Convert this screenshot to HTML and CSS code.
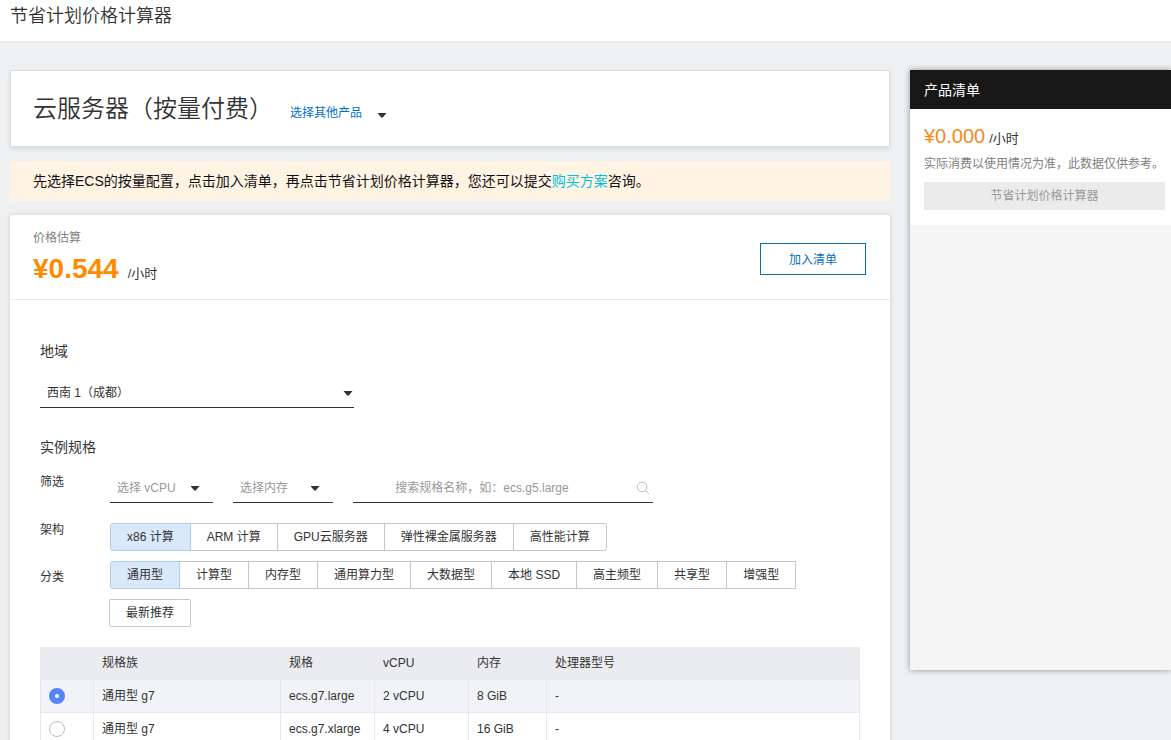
FILE: index.html
```html
<!DOCTYPE html>
<html lang="zh-CN">
<head>
<meta charset="utf-8">
<title>节省计划价格计算器</title>
<link rel="stylesheet" href="styles.css">
</head>
<body>
<div class="page">
  <header class="topbar"><h1 class="topbar-title">节省计划价格计算器</h1></header>
  <div class="layout">
    <main class="content">
      <section class="product">
        <h2 class="product-name">云服务器（按量付费）</h2>
        <button class="product-switch" type="button">选择其他产品<svg class="caret" viewBox="0 0 10 5" aria-hidden="true"><path d="M.5 0h9L6 4.300Q5 5.200 4 4.300z"/></svg></button>
      </section>
      <p class="notice">先选择ECS的按量配置，点击加入清单，再点击节省计划价格计算器，您还可以提交<a class="notice-link" href="#plan">购买方案</a>咨询。</p>
      <section class="config">
        <div class="estimate">
          <div>
            <div class="estimate-label">价格估算</div>
            <div class="estimate-price"><strong class="estimate-value">¥0.544</strong><span class="unit">/小时</span></div>
          </div>
          <button class="add-button" type="button">加入清单</button>
        </div>
        <div class="form">
          <label class="form-title" for="region">地域</label>
          <div class="select-box region-box">
            <select class="select" id="region"><option>西南 1（成都）</option></select>
            <svg class="caret" viewBox="0 0 10 5" aria-hidden="true"><path d="M.5 0h9L6 4.300Q5 5.200 4 4.300z"/></svg>
          </div>
          <h3 class="form-title spec-title">实例规格</h3>
          <div class="row filter-row">
            <span class="row-label">筛选</span>
            <div class="filters">
              <div class="select-box cpu-box">
                <select class="select select-empty" aria-label="选择 vCPU"><option>选择 vCPU</option></select>
                <svg class="caret" viewBox="0 0 10 5" aria-hidden="true"><path d="M.5 0h9L6 4.300Q5 5.200 4 4.300z"/></svg>
              </div>
              <div class="select-box memory-box">
                <select class="select select-empty" aria-label="选择内存"><option>选择内存</option></select>
                <svg class="caret" viewBox="0 0 10 5" aria-hidden="true"><path d="M.5 0h9L6 4.300Q5 5.200 4 4.300z"/></svg>
              </div>
              <div class="search-box">
                <input class="search" type="text" aria-label="搜索规格名称" placeholder="搜索规格名称，如：ecs.g5.large">
                <svg class="search-icon" viewBox="0 0 14 14" aria-hidden="true"><circle cx="6" cy="6" r="4.800"/><path d="M9.500 9.500L13 13"/></svg>
              </div>
            </div>
          </div>
          <div class="row arch-row">
            <span class="row-label">架构</span>
            <div class="segments">
              <button class="segment active" type="button">x86 计算</button>
              <button class="segment" type="button">ARM 计算</button>
              <button class="segment" type="button">GPU云服务器</button>
              <button class="segment" type="button">弹性裸金属服务器</button>
              <button class="segment" type="button">高性能计算</button>
            </div>
          </div>
          <div class="row type-row">
            <span class="row-label">分类</span>
            <div class="segments">
              <button class="segment active" type="button">通用型</button>
              <button class="segment" type="button">计算型</button>
              <button class="segment" type="button">内存型</button>
              <button class="segment" type="button">通用算力型</button>
              <button class="segment" type="button">大数据型</button>
              <button class="segment" type="button">本地 SSD</button>
              <button class="segment" type="button">高主频型</button>
              <button class="segment" type="button">共享型</button>
              <button class="segment" type="button">增强型</button>
              <button class="segment" type="button">最新推荐</button>
            </div>
          </div>
          <table class="specs">
            <colgroup><col class="col-pick"><col class="col-family"><col class="col-spec"><col class="col-cpu"><col class="col-memory"><col></colgroup>
            <thead>
              <tr><th></th><th>规格族</th><th>规格</th><th>vCPU</th><th>内存</th><th>处理器型号</th></tr>
            </thead>
            <tbody>
              <tr class="selected"><td><input class="radio" type="radio" name="spec" aria-label="ecs.g7.large" checked></td><td>通用型 g7</td><td>ecs.g7.large</td><td>2 vCPU</td><td>8 GiB</td><td>-</td></tr>
              <tr><td><input class="radio" type="radio" name="spec" aria-label="ecs.g7.xlarge"></td><td>通用型 g7</td><td>ecs.g7.xlarge</td><td>4 vCPU</td><td>16 GiB</td><td>-</td></tr>
            </tbody>
          </table>
        </div>
      </section>
    </main>
    <aside class="cart">
      <h2 class="cart-title">产品清单</h2>
      <div class="cart-summary">
        <div class="cart-price"><span class="cart-value">¥0.000</span><span class="unit">/小时</span></div>
        <p class="cart-note">实际消费以使用情况为准，此数据仅供参考。</p>
        <button class="cart-button" type="button" disabled>节省计划价格计算器</button>
      </div>
    </aside>
  </div>
</div>
</body>
</html>
```
FILE: styles.css
```css
* {
  box-sizing: border-box;
}

body {
  margin: 0;
  background: #eff0f2;
  color: #333;
  font-family: "Liberation Sans", "Noto Sans CJK SC", sans-serif;
  font-size: 12px;
  line-height: 20px;
}

h1, h2, h3, p {
  margin: 0;
  font-weight: 400;
}

button, input, select {
  margin: 0;
  color: inherit;
  font: inherit;
}

.page {
  height: 100vh;
  overflow: hidden;
}

.topbar {
  padding: 4px 10px 13px;
  background: #fff;
  border-bottom: 1px solid #e8eaec;
}

.topbar-title {
  font-size: 18px;
  font-weight: 350;
  line-height: 24px;
}

.layout {
  display: flex;
  align-items: flex-start;
  gap: 20px;
  padding: 28px 0 0 10px;
}

.content {
  flex: 1;
  min-width: 0;
}

.product {
  display: flex;
  align-items: center;
  gap: 17px;
  padding: 18px 22px 17px;
  background: #fff;
  border: 1px solid #dcdfe2;
  box-shadow: 0 2px 4px rgba(0, 0, 0, 0.1);
}

.product-name {
  font-size: 24px;
  font-weight: 350;
  line-height: 40px;
}

.product-switch {
  display: flex;
  align-items: center;
  gap: 15px;
  padding: 8px 0 0;
  background: none;
  border: 0;
  color: #0070cc;
}

.caret {
  width: 10px;
  height: 5px;
  fill: #333;
}

.product-switch .caret {
  margin-top: 4px;
}

.notice {
  margin: 14px 0;
  padding: 10px 23px;
  background: #fff3e4;
  color: #111;
  font-size: 14px;
}

.notice-link {
  color: #00c1de;
  text-decoration: none;
}

.config {
  background: #fff;
  border-radius: 2px;
  box-shadow: 0 0 5px rgba(0, 0, 0, 0.15);
}

.estimate {
  display: flex;
  align-items: center;
  justify-content: space-between;
  padding: 13px 24px 9px 23px;
  border-bottom: 1px solid #e9eaec;
}

.estimate-label {
  color: #808080;
}

.estimate-price {
  display: flex;
  align-items: baseline;
  gap: 9px;
  line-height: 42px;
}

.estimate-value {
  color: #ff8a00;
  font-size: 28px;
}

.unit {
  font-size: 13px;
  line-height: 20px;
}

.add-button {
  width: 106px;
  height: 32px;
  padding: 2px 0 0;
  background: #fff;
  border: 1px solid #0a6ebd;
  color: #0a6ebd;
}

.form {
  padding: 40px 30px 0;
}

.form-title {
  display: block;
  font-size: 14px;
  line-height: 22px;
}

.select-box, .search-box {
  position: relative;
  border-bottom: 1px solid #333;
}

.select, .search {
  display: block;
  width: 100%;
  height: 28px;
  padding: 0 28px 0 7px;
  appearance: none;
  background: none;
  border: 0;
  border-radius: 0;
  outline: 0;
}

.select-empty {
  color: #999;
}

.select-box .caret {
  position: absolute;
  top: 12px;
  right: 1px;
  pointer-events: none;
}

.region-box {
  width: 314px;
  margin: 17px 0 28px;
}

.row {
  display: flex;
}

.row-label {
  flex: 0 0 70px;
}

.filter-row {
  margin-top: 14px;
}

.filters {
  display: flex;
  gap: 20px;
  padding-top: 2px;
}

.cpu-box {
  width: 103px;
}

.memory-box {
  width: 100px;
}

.filters .caret {
  right: 13px;
}

.search-box {
  width: 300px;
}

.search {
  padding: 0 42px 0 0;
  text-align: center;
}

.search::placeholder {
  color: #999;
  opacity: 1;
}

.search-icon {
  position: absolute;
  top: 7px;
  right: 3px;
  width: 14px;
  height: 14px;
  fill: none;
  stroke: #bdbdbd;
}

.arch-row {
  margin-top: 20px;
}

.arch-row .row-label {
  line-height: 14px;
}

.type-row {
  margin-top: 10px;
}

.type-row .row-label {
  padding-top: 6px;
}

.segments {
  display: flex;
  flex-wrap: wrap;
  row-gap: 10px;
}

.segment {
  height: 28px;
  margin-left: -1px;
  padding: 0 16px;
  background: #fff;
  border: 1px solid #c4c6c9;
}

.segment:first-child {
  margin-left: 0;
  border-radius: 3px 0 0 3px;
}

.segment:last-child {
  border-radius: 0 3px 3px 0;
}

.type-row .segment:last-child {
  border-radius: 2px;
}

.segment.active {
  position: relative;
  background: #d9e9f9;
  border-color: #afd0ec;
}

.specs {
  width: 100%;
  margin-top: 20px;
  table-layout: fixed;
  border-collapse: separate;
  border-spacing: 0;
}

.col-pick {
  width: 54px;
}

.col-family {
  width: 187px;
}

.col-spec, .col-cpu {
  width: 94px;
}

.col-memory {
  width: 78px;
}

.specs th, .specs td {
  height: 33px;
  padding: 0 8px;
  border-right: 1px solid #e8e9ed;
  border-bottom: 1px solid #e8e9ed;
  font-weight: 400;
  text-align: left;
}

.specs th {
  background: #ebecef;
  border-color: #ebecef;
}

.specs td:first-child {
  border-left: 1px solid #e8e9ed;
}

.selected {
  background: #f1f3f7;
}

.radio {
  display: block;
  width: 16px;
  height: 16px;
  appearance: none;
  background: #fff;
  border: 1px solid #bcbec2;
  border-radius: 50%;
}

.radio:checked {
  border: 6px solid #5584ff;
}

.cart {
  flex: 0 0 261px;
  min-height: 600px;
  background: #f5f5f5;
  box-shadow: 0 0 6px rgba(0, 0, 0, 0.4);
}

.cart-title {
  padding: 10px 14px 9px;
  background: #181818;
  color: #fff;
  font-size: 14px;
}

.cart-summary {
  padding: 11px 6px 15px 14px;
  background: #fff;
}

.cart-price {
  display: flex;
  align-items: baseline;
  gap: 4px;
  line-height: 32px;
}

.cart-value {
  color: #f58a1f;
  font-size: 20px;
}

.cart-note {
  margin: 2px 0 8px;
  color: #808080;
  white-space: nowrap;
}

.cart-button {
  width: 100%;
  height: 28px;
  background: #ebebeb;
  border: 0;
  color: #999;
}
```
